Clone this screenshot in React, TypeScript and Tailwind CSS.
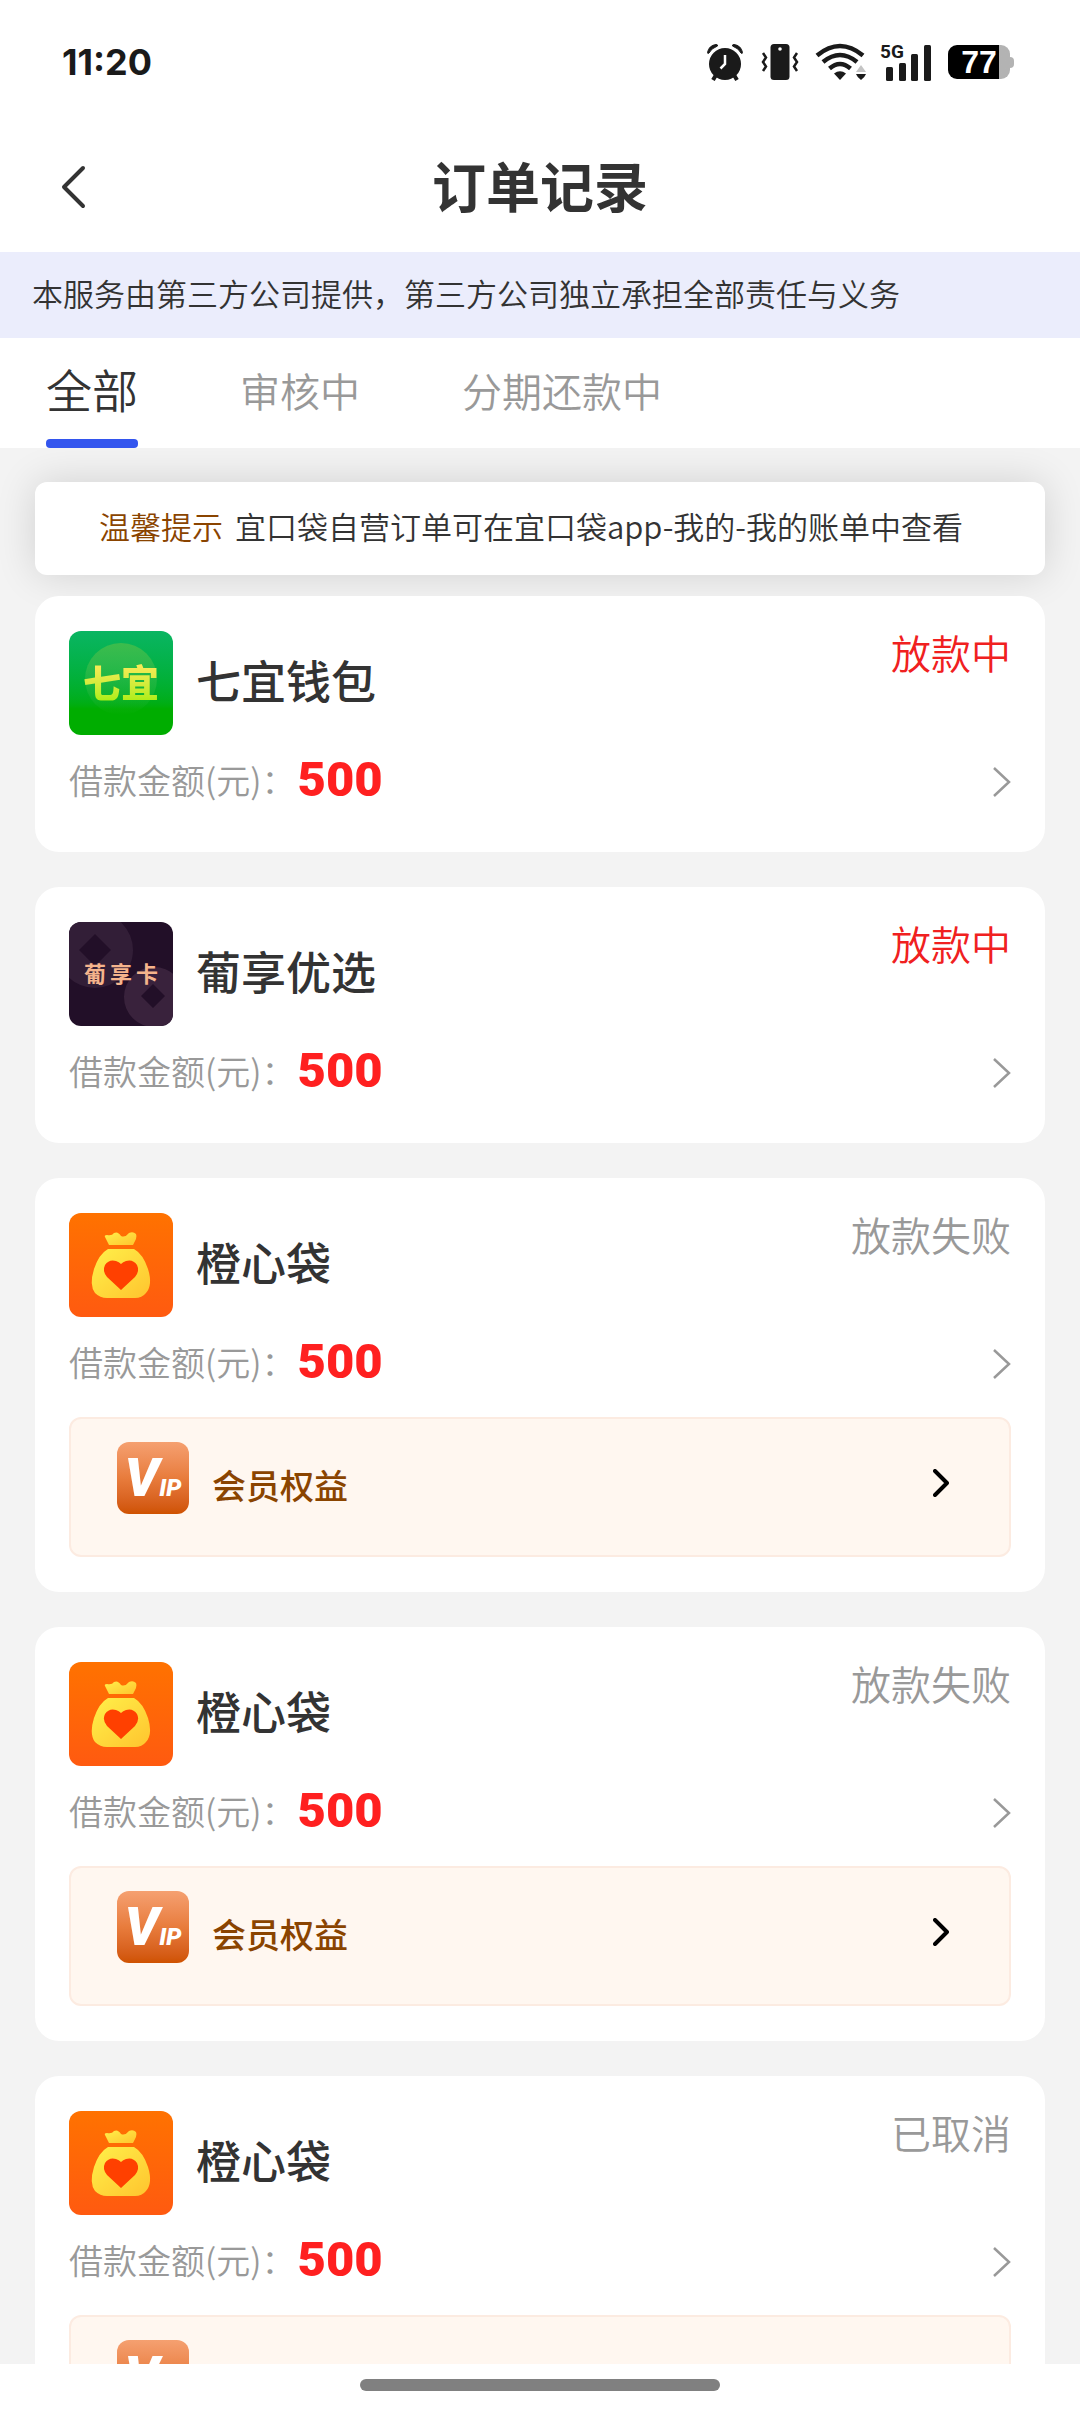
import { useId } from 'react';

type Order = {
  id: number;
  name: string;
  logo: 'qiyi' | 'puxiang' | 'chengxin';
  amount: number;
  status: string;
  active?: boolean;
  vip?: boolean;
};

const orders: Order[] = [
  { id: 1, name: '七宜钱包', logo: 'qiyi', amount: 500, status: '放款中', active: true },
  { id: 2, name: '葡享优选', logo: 'puxiang', amount: 500, status: '放款中', active: true },
  { id: 3, name: '橙心袋', logo: 'chengxin', amount: 500, status: '放款失败', vip: true },
  { id: 4, name: '橙心袋', logo: 'chengxin', amount: 500, status: '放款失败', vip: true },
  { id: 5, name: '橙心袋', logo: 'chengxin', amount: 500, status: '已取消', vip: true },
];

const tabs = ['全部', '审核中', '分期还款中'];

function StatusBar() {
  return (
    <div className="flex h-[124px] items-center justify-between pl-[62px] pr-[66px] text-[#1a1a1a]">
      <span className="font-['Inter',sans-serif] text-[36px] leading-none font-bold">11:20</span>
      <div className="flex items-center">
        {/* alarm */}
        <svg className="mr-[17px] h-[38px] w-[38px]" viewBox="0 0 38 38" fill="currentColor">
          <circle cx="19" cy="21" r="16" />
          <path d="M1.5 9.5A10 10 0 0 1 10 1.500Q12 1.500 11.500 3Q5 5.500 3 10Q1.500 11 1.500 9.500ZM36.500 9.500A10 10 0 0 0 28 1.500Q26 1.500 26.500 3Q33 5.500 35 10Q36.500 11 36.500 9.500Z" stroke="currentColor" strokeLinejoin="round" />
          <path d="M10 32l-3 5M28 32l3 5" stroke="currentColor" strokeWidth="4" />
          <path d="M19 12v9l-4.500 4.500" stroke="#fff" strokeWidth="2.500" fill="none" />
        </svg>
        {/* vibrate */}
        <svg className="mr-4 h-[38px] w-[38px]" viewBox="0 0 38 38" fill="none">
          <rect x="9.500" y="1" width="19" height="36" rx="3.500" fill="currentColor" />
          <circle cx="19" cy="6" r="1.800" fill="#fff" />
          <path d="M2 10l3 4.500-3 4.500 3 4.500-3 4.500M36 10l-3 4.500 3 4.500-3 4.500 3 4.500" stroke="currentColor" strokeWidth="2.500" />
        </svg>
        {/* wifi */}
        <svg className="mr-[11px] h-[38px] w-[54px]" viewBox="0 0 54 38" fill="none" stroke="currentColor" strokeWidth="4.500">
          <path d="M2 12.500Q25 -6.500 48 12.500M8 19Q25 5 42 19M14.500 25.500Q25 16.500 35.500 25.500" />
          <path d="M19 30.500Q25 26 31 30.500L25 37Z" fill="currentColor" stroke="none" />
          <path d="M41 29h10l-5-7z" fill="#c4c4c4" stroke="none" />
          <path d="M41 31h10q-1 3-5 6-4-3-5-6z" fill="currentColor" stroke="none" />
        </svg>
        {/* signal */}
        <div className="relative mr-4 h-[38px] w-[52px]">
          <svg className="h-full w-full" viewBox="0 0 52 38" fill="currentColor">
            <rect x="6" y="24" width="7" height="14" rx="1.500" />
            <rect x="19" y="20" width="7" height="18" rx="1.500" />
            <rect x="31" y="11" width="7" height="27" rx="1.500" />
            <rect x="44" y="2" width="7" height="36" rx="1.500" />
          </svg>
          <span className="absolute top-0 left-0 font-['Roboto',sans-serif] text-[19px] leading-[18px] font-bold">5G</span>
        </div>
        {/* battery */}
        <div className="flex items-center">
          <div className="flex h-[34px] w-[62px] items-center overflow-hidden rounded-[9px] bg-gradient-to-r from-black from-82% to-[#b3b3b3] to-82%">
            <span className="w-full text-center font-['Liberation_Sans',Arial,sans-serif] text-[32px] leading-none font-bold text-white">77</span>
          </div>
          <div className="h-[11px] w-1 rounded-r-sm bg-[#b3b3b3]" />
        </div>
      </div>
    </div>
  );
}

function BagLogo() {
  const id = useId();
  return (
    <svg className="h-full w-full" viewBox="0 0 104 104">
      <defs>
        <linearGradient id={`${id}bg`} x1="0" y1="0" x2="0" y2="1">
          <stop offset="0" stopColor="#ff7200" />
          <stop offset="1" stopColor="#ff5a10" />
        </linearGradient>
        <linearGradient id={`${id}bag`} x1="0" y1="0" x2="1" y2="1">
          <stop offset="0" stopColor="#fff04a" />
          <stop offset="1" stopColor="#ffc42e" />
        </linearGradient>
      </defs>
      <rect width="104" height="104" fill={`url(#${id}bg)`} />
      <path d="M40 32L36 24Q35 22 38 22Q43 23 45 20Q49 18 52 23Q56 25 60 20Q64 18 67 21Q68 23 67 26L64 32Z" fill={`url(#${id}bag)`} />
      <path d="M39 36H65Q74 41 79 56Q84 72 77 80Q73 85 66 85H38Q31 85 26 80Q20 72 25 56Q30 41 39 36Z" fill={`url(#${id}bag)`} />
      <path d="M52 77L38 64Q33 58 36 52Q40 46 47 48Q50 49 52 51Q54 49 57 48Q64 46 68 52Q71 58 66 64Z" fill="#ff4000" />
    </svg>
  );
}

function QiyiLogo() {
  return (
    <div className="relative flex h-full w-full items-center justify-center bg-gradient-to-b from-[#0ab562] to-[#00ad00] to-75%">
      <div className="absolute top-3 left-4 h-[72px] w-[72px] rounded-full bg-gradient-to-b from-[#3cbc4c] to-transparent" />
      <span className="relative bg-gradient-to-b from-[#ffe95a] to-[#a5ee00] bg-clip-text pb-1 text-[38px] leading-none font-black text-transparent">七宜</span>
    </div>
  );
}

function PuxiangLogo() {
  return (
    <div className="relative h-full w-full">
      <svg className="h-full w-full" viewBox="0 0 104 104">
        <rect width="104" height="104" fill="#220f28" />
        <path fillRule="evenodd" d="M-12 28a38 38 0 1 0 76 0a38 38 0 1 0-76 0ZM26 12l16 16-16 16-16-16Z" fill="#321e37" />
        <path fillRule="evenodd" d="M55 75a30 30 0 1 0 60 0a30 30 0 1 0-60 0ZM84 62l12 12-12 12-12-12Z" fill="#39223c" />
      </svg>
      <span className="absolute inset-0 flex items-center justify-center gap-1 pb-1 text-[22px] font-bold text-[#f5b48c]">
        <span>葡</span>
        <span>享</span>
        <span>卡</span>
      </span>
    </div>
  );
}

function VipBadge() {
  return (
    <span className="mt-[23px] flex h-[72px] w-[72px] shrink-0 items-baseline justify-center self-start rounded-xl bg-gradient-to-b from-[#f5a070] via-[#e87c3c] to-[#cf5200] font-['Roboto',sans-serif] font-black text-white italic">
      <span className="text-[54px] leading-[72px]">V</span>
      <span className="text-[24px] leading-none">IP</span>
    </span>
  );
}

function Logo({ kind }: { kind: Order['logo'] }) {
  return (
    <div className="h-[104px] w-[104px] shrink-0 overflow-hidden rounded-xl">
      {kind === 'qiyi' && <QiyiLogo />}
      {kind === 'puxiang' && <PuxiangLogo />}
      {kind === 'chengxin' && <BagLogo />}
    </div>
  );
}

function OrderCard({ order }: { order: Order }) {
  return (
    <article className="rounded-[24px] bg-white px-[34px] py-[35px]">
      <div className="flex items-start justify-between">
        <div className="flex items-center gap-[23px]">
          <Logo kind={order.logo} />
          <h2 className="pb-1.5 text-[45px] leading-[60px] font-medium">{order.name}</h2>
        </div>
        <span className={`text-[40px] leading-[42px] font-[350] ${order.active ? 'text-[#f02020]' : 'text-[#999]'}`}>
          {order.status}
        </span>
      </div>
      <a href="#" className="mt-3 flex h-[70px] items-center">
        <span className="pb-1.5 text-[34px] font-[350] text-[#999]">借款金额(元)：</span>
        <span className="ml-0.5 pb-1.5 font-['Roboto',sans-serif] text-[49px] leading-none font-black text-[#ff2020]">{order.amount}</span>
        <svg className="ml-auto h-[30px] w-[18px]" viewBox="0 0 18 30" fill="none" stroke="#999" strokeWidth="2.500">
          <path d="M1 1l15 14L1 29" />
        </svg>
      </a>
      {order.vip && (
        <button type="button" className="mt-[18px] flex min-h-[140px] w-full items-center rounded-xl border-2 border-[#fcebe1] bg-[#fff7f0] pr-[60px] pl-[46px]">
          <VipBadge />
          <span className="ml-[23px] pb-1.5 text-[34px] font-medium text-[#8a4400]">会员权益</span>
          <svg className="mb-2 ml-auto h-7 w-4" viewBox="0 0 16 28" fill="none" stroke="#000" strokeWidth="4" strokeLinecap="round" strokeLinejoin="round">
            <path d="M2 2l12 12L2 26" />
          </svg>
        </button>
      )}
    </article>
  );
}

export default function App() {
  return (
    <div className="flex h-screen flex-col bg-white font-['Noto_Sans_CJK_SC',sans-serif] text-[#333]">
      <StatusBar />
      <header className="grid h-32 grid-cols-[1fr_auto_1fr] items-center px-[60px] pb-[3px]">
        <button type="button" aria-label="返回" className="justify-self-start">
          <svg className="h-[44px] w-[26px]" viewBox="0 0 26 44" fill="none" stroke="#333" strokeWidth="4" strokeLinecap="round" strokeLinejoin="round">
            <path d="M23 3L4 22l19 19" />
          </svg>
        </button>
        <h1 className="pb-1 text-[54px] leading-none font-bold">订单记录</h1>
      </header>

      <p className="bg-[#ebedfc] px-8 pt-[17px] pb-[21px] text-[31px] leading-[48px] font-[350]">
        本服务由第三方公司提供，第三方公司独立承担全部责任与义务
      </p>

      <nav className="flex h-[110px] shrink-0 gap-[102px] px-[46px]">
        {tabs.map((tab, i) => (
          <button
            key={tab}
            type="button"
            className={
              i === 0
                ? 'flex flex-col justify-between pt-[18px] text-[46px] leading-[64px] font-[350]'
                : 'flex flex-col pt-5 text-[40px] leading-[64px] font-[350] text-[#999]'
            }
          >
            {tab}
            {i === 0 && <span className="h-[9px] w-full rounded bg-[#3355ee]" />}
          </button>
        ))}
      </nav>

      <main className="min-h-0 flex-1 overflow-y-auto bg-[#f3f3f3] px-[35px] pt-[34px] [scrollbar-width:none]">
        <p className="mb-[21px] flex gap-3 rounded-[12px] bg-white pt-[19px] pb-[25px] pl-16 text-[31px] leading-[49px] font-[350] whitespace-nowrap shadow-[0_0_40px_rgba(0,0,0,0.14)]">
          <span className="text-[#8a4400]">温馨提示</span>
          <span>宜口袋自营订单可在宜口袋app-我的-我的账单中查看</span>
        </p>
        <div className="flex flex-col gap-[35px]">
          {orders.map((order) => (
            <OrderCard key={order.id} order={order} />
          ))}
        </div>
      </main>

      <footer className="flex h-12 shrink-0 justify-center pt-[15px]">
        <div className="h-3 w-1/3 rounded-full bg-[#808080]" />
      </footer>
    </div>
  );
}
